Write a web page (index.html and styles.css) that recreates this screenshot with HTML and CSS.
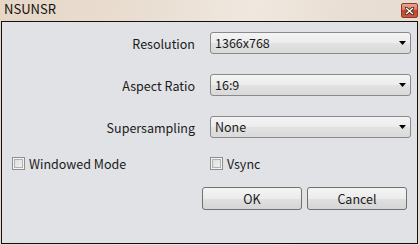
FILE: index.html
```html
<!DOCTYPE html>
<html lang="en">
<head>
  <meta charset="UTF-8" />
  <title>NSUNSR</title>
  <link rel="stylesheet" href="styles.css">
</head>
<body>
  <div class="window">
    <div class="titlebar">
      <span class="title">NSUNSR</span>
      <span class="close-btn">
        <svg width="9" height="8" viewBox="0 0 9 8">
          <path d="M1 1 L8 7 M8 1 L1 7" stroke="#3a2a22" stroke-width="3" stroke-linecap="square" />
          <path d="M1 1 L8 7 M8 1 L1 7" stroke="#fff" stroke-width="1.4" />
        </svg>
      </span>
    </div>

    <div class="panel">
      <div class="settings">
        <label class="field-label">Resolution</label>
        <div class="combo">
          <span>1366x768</span>
          <svg class="arrow" width="7" height="4" viewBox="0 0 7 4"><path d="M0 0 H7 L3.5 4 Z" fill="#000" /></svg>
        </div>

        <label class="field-label">Aspect Ratio</label>
        <div class="combo">
          <span>16:9</span>
          <svg class="arrow" width="7" height="4" viewBox="0 0 7 4"><path d="M0 0 H7 L3.5 4 Z" fill="#000" /></svg>
        </div>

        <label class="field-label">Supersampling</label>
        <div class="combo">
          <span>None</span>
          <svg class="arrow" width="7" height="4" viewBox="0 0 7 4"><path d="M0 0 H7 L3.5 4 Z" fill="#000" /></svg>
        </div>
      </div>

      <div class="checks">
        <label class="check"><span class="box"></span>Windowed Mode</label>
        <label class="check"><span class="box"></span>Vsync</label>
      </div>

      <div class="actions">
        <button class="btn">OK</button>
        <button class="btn">Cancel</button>
      </div>
    </div>
  </div>
</body>
</html>
```

FILE: styles.css
```css
:root {
  --panel-bg: #e1e2e6;
  --text: #1a1a1a;
  --ctrl-border: #8a8a8a;
}
html, body {
  margin: 0;
  height: 100%;
}
body {
  font-family: 'Noto Sans CJK SC', 'Noto Sans', sans-serif;
  font-size: 12.5px;
  color: var(--text);
  background: #ece3da;
}
.window {
  width: 420px;
  height: 245px;
  display: flex;
  flex-direction: column;
  background: linear-gradient(100deg, #e6d6c6 0%, #eadfd3 35%, #f0e8df 55%, #e9ded3 75%, #e6dcd2 100%);
}
.titlebar {
  height: 21px;
  display: flex;
  align-items: flex-start;
  justify-content: space-between;
  padding: 0 2px 0 4px;
  box-sizing: border-box;
}
.title {
  font-size: 13px;
  line-height: 17px;
  color: #111;
}
.close-btn {
  width: 17px;
  height: 15px;
  margin-top: 3px;
  box-sizing: border-box;
  border: 1px solid #8d3a2a;
  border-radius: 2px;
  background: linear-gradient(#eba58e 0%, #dc7a5e 45%, #c5452a 50%, #d0583a 100%);
  display: flex;
  align-items: center;
  justify-content: center;
}
.panel {
  margin: 0 2px 1px 1px;
  flex: 1;
  background: var(--panel-bg);
  border: 1px solid #111;
  padding: 10px 8px 0 10px;
  display: flex;
  flex-direction: column;
}
.settings {
  display: grid;
  grid-template-columns: 185px 201px;
  column-gap: 13px;
  row-gap: 20px;
  align-items: center;
}
.field-label {
  text-align: right;
  padding-right: 2px;
}
.combo {
  height: 22px;
  box-sizing: border-box;
  border: 1px solid var(--ctrl-border);
  border-radius: 3px;
  background: linear-gradient(#f4f4f4 0%, #ececec 50%, #e2e2e2 51%, #d9d9d9 100%);
  display: flex;
  align-items: center;
  justify-content: space-between;
  padding: 0 4px;
  line-height: 20px;
}
.arrow {
  display: block;
}
.checks {
  display: grid;
  grid-template-columns: 198px auto;
  margin-top: 19px;
}
.check {
  display: flex;
  align-items: center;
  gap: 4px;
  line-height: 13px;
}
.box {
  width: 13px;
  height: 13px;
  box-sizing: border-box;
  border: 1px solid #8e8f8f;
  box-shadow: inset 0 0 0 1px #f4f4f4, inset 0 0 0 2px #b0b0b0;
  background-image: linear-gradient(135deg, #d9d9d9, #f4f4f4);
}
.actions {
  display: flex;
  justify-content: flex-end;
  gap: 5px;
  margin-top: 17px;
  padding-right: 2px;
}
.btn {
  width: 100px;
  height: 23px;
  border: 1px solid #707070;
  border-radius: 3px;
  background: linear-gradient(#f4f4f4 0%, #ececec 50%, #e0e0e0 51%, #d6d6d6 100%);
  font-family: inherit;
  font-size: 12.5px;
  color: var(--text);
  padding: 0;
}
```
